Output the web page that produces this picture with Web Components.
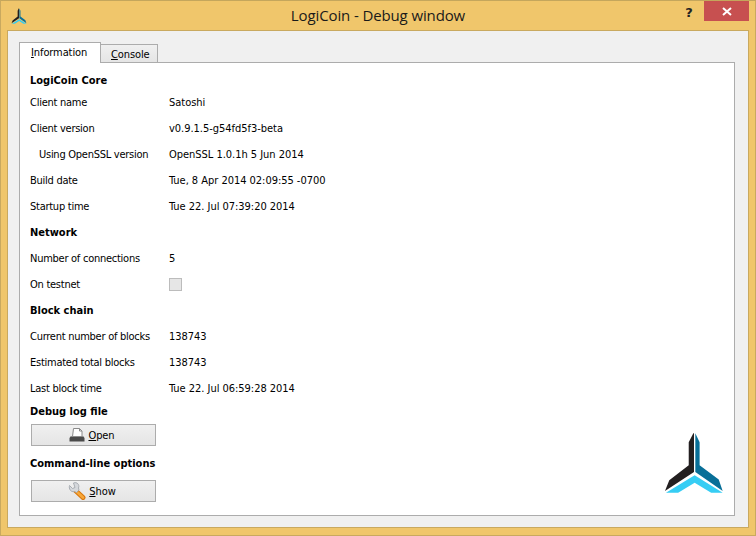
<!DOCTYPE html>
<html>
<head>
<meta charset="utf-8">
<title>LogiCoin - Debug window</title>
<style>
  html, body { margin: 0; padding: 0; overflow: hidden; }
  body { width: 756px; height: 536px; font: 11px/13px "DejaVu Sans Condensed", "DejaVu Sans", sans-serif; font-stretch: condensed; letter-spacing: -0.1px; color: #000; }
</style>
</head>
<body>
<svg width="0" height="0" style="position:absolute">
  <symbol id="logo-mark" viewBox="70 34 186 188">
    <path fill="#231f20" d="M161 38 147 65V135L88 180 75 213 163 155V38Z"/>
    <path fill="#086f98" d="M167 38 180 65V135L238 178 250 213 167 155V38Z"/>
    <path fill="#36cdf4" d="M78 218 165 165 250 218H215L165 188 115 218Z"/>
  </symbol>
</svg>

<dbg-window>
  <info-section title="LogiCoin Core" first></info-section>
  <info-row label="Client name">Satoshi</info-row>
  <info-row label="Client version">v0.9.1.5-g54fd5f3-beta</info-row>
  <info-row label="Using OpenSSL version" indent>OpenSSL 1.0.1h 5 Jun 2014</info-row>
  <info-row label="Build date">Tue, 8 Apr 2014 02:09:55 -0700</info-row>
  <info-row label="Startup time">Tue 22. Jul 07:39:20 2014</info-row>
  <info-section title="Network"></info-section>
  <info-row label="Number of connections">5</info-row>
  <info-row label="On testnet"><dbg-check></dbg-check></info-row>
  <info-section title="Block chain"></info-section>
  <info-row label="Current number of blocks">138743</info-row>
  <info-row label="Estimated total blocks">138743</info-row>
  <info-row label="Last block time">Tue 22. Jul 06:59:28 2014</info-row>
  <info-section title="Debug log file" compact></info-section>
  <dbg-button icon="printer" key="O" rest="pen"></dbg-button>
  <info-section title="Command-line options" compact></info-section>
  <dbg-button icon="wrench" key="S" rest="how" style="--button-top: 7px"></dbg-button>
</dbg-window>

<script>
const windowTemplate = document.createElement("template");
windowTemplate.innerHTML = `
  <style>
    :host {
      display: flex;
      flex-direction: column;
      box-sizing: border-box;
      width: 756px;
      height: 536px;
      background: #f0c66b;
      border-top: 1px solid #c4a65c;
      border-right: 1px solid #c9a95f;
      border-bottom: 1px solid #c9a95f;
      border-left: 1px solid #c9a95f;
    }
    .title {
      display: flex;
      align-items: flex-start;
      height: 29px;
      padding-left: 10px;
      flex: none;
    }
    .title__icon { width: 16px; height: 16px; margin-top: 7px; flex: none; }
    .title__text {
      flex: 1;
      text-align: center;
      font: 15px/20px "Open Sans", sans-serif;
      letter-spacing: -0.12px;
      color: #1a1a1a;
      margin-top: 4px;
      padding-left: 47px;
    }
    .title__help {
      width: 14px;
      margin: 4px 8px 0 0;
      font: bold 13px/16px "DejaVu Sans", sans-serif;
      letter-spacing: 0;
      color: #222;
      text-align: center;
    }
    .title__close {
      width: 45px;
      height: 20px;
      margin-right: 6px;
      background: #c75050;
      display: flex;
      align-items: center;
      justify-content: center;
    }
    .client {
      flex: 1;
      margin: 0 6px 7px 6px;
      border: 1px solid #c9a95f;
      background: #f0f0f0;
      padding: 11px 13px 11px 11px;
      display: flex;
      flex-direction: column;
      min-height: 0;
    }
    .tabs { display: flex; align-items: flex-end; height: 20px; flex: none; position: relative; z-index: 1; }
    .tab {
      box-sizing: border-box;
      border: 1px solid #acacac;
      border-bottom: 0;
      padding-left: 11px;
      color: #000;
    }
    .tab--on { width: 82px; height: 21px; background: #fff; margin-bottom: -1px; line-height: 19px; }
    .tab--off {
      width: 58px;
      height: 18px;
      margin-left: -1px;
      padding-left: 10px;
      line-height: 19px;
      background: linear-gradient(#f0f0f0, #e5e5e5);
    }
    .pane {
      flex: 1;
      border: 1px solid #acacac;
      background: #fff;
      display: flex;
      min-height: 0;
    }
    .pane__body { flex: 1; padding: 6px 0 0 10px; }
    .pane__logo { width: 62px; height: 62px; align-self: flex-end; margin: 0 9px 21px 0; flex: none; }
  </style>
  <div class="title">
    <svg class="title__icon"><use href="#logo-mark"></use></svg>
    <div class="title__text">LogiCoin - Debug window</div>
    <div class="title__help">?</div>
    <div class="title__close">
      <svg width="10" height="9" viewBox="0 0 10 9"><path d="M1 1 9 8M9 1 1 8" stroke="#fff" stroke-width="2" fill="none"/></svg>
    </div>
  </div>
  <div class="client">
    <div class="tabs">
      <div class="tab tab--on"><u>I</u>nformation</div>
      <div class="tab tab--off"><u>C</u>onsole</div>
    </div>
    <div class="pane">
      <div class="pane__body"><slot></slot></div>
      <svg class="pane__logo"><use href="#logo-mark"></use></svg>
    </div>
  </div>
`;

class DbgWindow extends HTMLElement {
  constructor() {
    super();
    this.attachShadow({ mode: "open" });
    this.shadowRoot.appendChild(windowTemplate.content.cloneNode(true));
    // the symbol lives in the page, so copy it in for the shadow tree's <use>
    const defs = document.getElementById("logo-mark").cloneNode(true);
    const holder = document.createElementNS("http://www.w3.org/2000/svg", "svg");
    holder.setAttribute("width", "0");
    holder.setAttribute("height", "0");
    holder.style.position = "absolute";
    holder.appendChild(defs);
    this.shadowRoot.appendChild(holder);
  }
}

const sectionTemplate = document.createElement("template");
sectionTemplate.innerHTML = `
  <style>
    :host {
      display: flex;
      align-items: center;
      box-sizing: border-box;
      height: 26px;
      font-weight: bold;
      letter-spacing: 0;
    }
    :host([first]) { height: 22px; margin-bottom: -2px; }
    :host([compact]) { height: 20px; }
  </style>
  <span></span>
`;

class InfoSection extends HTMLElement {
  constructor() {
    super();
    this.attachShadow({ mode: "open" });
    this.shadowRoot.appendChild(sectionTemplate.content.cloneNode(true));
  }

  connectedCallback() {
    this.shadowRoot.querySelector("span").textContent = this.getAttribute("title");
  }
}

const rowTemplate = document.createElement("template");
rowTemplate.innerHTML = `
  <style>
    :host { display: grid; grid-template-columns: 139px 1fr; align-items: center; height: 26px; letter-spacing: -0.03px; }
    .label { letter-spacing: -0.26px; }
    .label[data-indent] { padding-left: 9px; }
  </style>
  <div class="label"></div>
  <div><slot></slot></div>
`;

class InfoRow extends HTMLElement {
  constructor() {
    super();
    this.attachShadow({ mode: "open" });
    this.shadowRoot.appendChild(rowTemplate.content.cloneNode(true));
  }

  connectedCallback() {
    const label = this.shadowRoot.querySelector(".label");
    label.textContent = this.getAttribute("label");
    if (this.hasAttribute("indent")) label.setAttribute("data-indent", "");
  }
}

const checkTemplate = document.createElement("template");
checkTemplate.innerHTML = `
  <style>
    :host {
      display: block;
      box-sizing: border-box;
      width: 13px;
      height: 13px;
      background: #e6e6e6;
      border: 1px solid #bcbcbc;
    }
  </style>
`;

class DbgCheck extends HTMLElement {
  constructor() {
    super();
    this.attachShadow({ mode: "open" });
    this.shadowRoot.appendChild(checkTemplate.content.cloneNode(true));
  }
}

const ICONS = {
  printer: `<svg width="16" height="14" viewBox="0 0 16 14">
    <path d="M4.5 .5H10.5L13 3V8.5H3.5Z" fill="#fff" stroke="#8a8a8a"/>
    <path d="M10.5 .5V3H13" fill="none" stroke="#8a8a8a"/>
    <path d="M2 8H14L15.5 10V13.5H.5V10Z" fill="#4a4a4a"/>
    <path d="M2 8.5H14" stroke="#8d8d8d"/>
  </svg>`,
  wrench: `<svg width="18" height="18" viewBox="0 0 18 18">
    <path d="M8 9 15 15.5" stroke="#d9780f" stroke-width="5" stroke-linecap="round"/>
    <path d="M8 9 15 15.5" stroke="#f8a83a" stroke-width="2.6" stroke-linecap="round"/>
    <path d="M1.5 3.5 4.5 6.5 7 5.5 5.5 1C8.5 -.5 12 2.5 10.5 6L11 8 8.5 10.5 6.5 9.5C3 10.5 .5 7 1.5 3.5Z" fill="#d5d8dc" stroke="#9aa0a6" stroke-width=".8"/>
  </svg>`
};

const buttonTemplate = document.createElement("template");
buttonTemplate.innerHTML = `
  <style>
    :host {
      display: flex;
      align-items: center;
      justify-content: center;
      gap: 3px;
      box-sizing: border-box;
      width: 125px;
      height: 22px;
      padding-right: 3px;
      margin: var(--button-top, 3px) 0 7px 1px;
      border: 1px solid #acacac;
      background: linear-gradient(#f0f0f0, #e5e5e5);
    }
    .icon { display: flex; }
  </style>
  <span class="icon"></span>
  <span><u></u><span class="rest"></span></span>
`;

class DbgButton extends HTMLElement {
  constructor() {
    super();
    this.attachShadow({ mode: "open" });
    this.shadowRoot.appendChild(buttonTemplate.content.cloneNode(true));
  }

  connectedCallback() {
    this.shadowRoot.querySelector(".icon").innerHTML = ICONS[this.getAttribute("icon")];
    this.shadowRoot.querySelector("u").textContent = this.getAttribute("key");
    this.shadowRoot.querySelector(".rest").textContent = this.getAttribute("rest");
  }
}

customElements.define("dbg-window", DbgWindow);
customElements.define("info-section", InfoSection);
customElements.define("info-row", InfoRow);
customElements.define("dbg-check", DbgCheck);
customElements.define("dbg-button", DbgButton);
</script>
</body>
</html>
